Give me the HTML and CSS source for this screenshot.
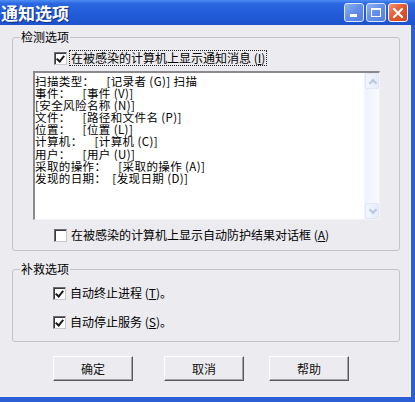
FILE: index.html
```html
<!DOCTYPE html>
<html lang="zh-CN">
    <head>
        <meta charset="UTF-8" />
        <link rel="stylesheet" href="styles.css">
        <title>通知选项</title>
    </head>

    <body>
        <div class="window">
            <div class="titlebar">
                <span class="title">通知选项</span>
                <div class="controls">
                    <span class="ctl min"><i></i></span>
                    <span class="ctl max"><i></i></span>
                    <span class="ctl close">
                        <svg width="12" height="12" viewBox="0 0 12 12"><path d="M2 2 L10 10 M10 2 L2 10" stroke="#fff" stroke-width="2.2" stroke-linecap="round"/></svg>
                    </span>
                </div>
            </div>

            <div class="frame">
                <div class="client">
                    <fieldset class="group detect">
                        <legend>检测选项</legend>
                        <label class="check first">
                            <span class="box checked"></span>
                            <span class="text focus">在被感染的计算机上显示通知消息 (<u>I</u>)</span>
                        </label>
                        <div class="memo">
                            <div class="memo-text">扫描类型：    [记录者 (G)] 扫描
事件：    [事件 (V)]
[安全风险名称 (N)]
文件：    [路径和文件名 (P)]
位置：    [位置 (L)]
计算机：    [计算机 (C)]
用户：    [用户 (U)]
采取的操作：    [采取的操作 (A)]
发现的日期：  [发现日期 (D)]</div>
                            <div class="scroll">
                                <span class="arrow up"></span>
                                <span class="track"></span>
                                <span class="arrow down"></span>
                            </div>
                        </div>
                        <label class="check second">
                            <span class="box"></span>
                            <span class="text">在被感染的计算机上显示自动防护结果对话框 (<u>A</u>)</span>
                        </label>
                    </fieldset>

                    <fieldset class="group remedy">
                        <legend>补救选项</legend>
                        <label class="check kill">
                            <span class="box checked"></span>
                            <span class="text">自动终止进程 (<u>T</u>)。</span>
                        </label>
                        <label class="check stop">
                            <span class="box checked"></span>
                            <span class="text">自动停止服务 (<u>S</u>)。</span>
                        </label>
                    </fieldset>

                    <div class="buttons">
                        <button class="btn ok">确定</button>
                        <button class="btn cancel">取消</button>
                        <button class="btn help">帮助</button>
                    </div>
                </div>
            </div>
        </div>
    </body>
</html>
```

FILE: styles.css
```css
@charset "utf-8";

* {
    margin: 0;
    padding: 0;
    box-sizing: border-box;
}

body {
    font-family: "Noto Sans CJK SC", "Liberation Sans", sans-serif;
    font-size: 12px;
    color: #000;
    overflow: hidden;
    background: #ecebef;
}

.window {
    width: 415px;
    height: 402px;
    display: flex;
    flex-direction: column;
}

/* title bar */
.titlebar {
    height: 25px;
    display: flex;
    align-items: center;
    justify-content: space-between;
    background: linear-gradient(to bottom, #4d8cf4 0%, #2a66e0 15%, #215bd8 60%, #1d52cc 100%);
}

.title {
    color: #fff;
    font-size: 17px;
    font-weight: 700;
    line-height: 20px;
    padding-left: 1px;
    text-shadow: 1px 1px 0 #0c2f88;
}

.controls {
    display: flex;
    gap: 2px;
    padding-right: 7px;
}

.ctl {
    width: 20px;
    height: 19px;
    border: 1px solid #dfe7fb;
    border-radius: 3px;
    display: flex;
    align-items: center;
    justify-content: center;
    background: linear-gradient(135deg, #8eb1f4 0%, #628de8 50%, #557fe0 100%);
}

.min {
    align-items: flex-end;
    justify-content: flex-start;
    padding: 0 0 4px 5px;
}

.min i {
    width: 7px;
    height: 3px;
    background: #fff;
}

.max i {
    width: 10px;
    height: 9px;
    border: 1px solid #fff;
    border-top-width: 2px;
}

.close {
    border-color: #f4f6fd;
    background: linear-gradient(135deg, #f39272 0%, #e2562e 50%, #d24522 100%);
}

/* frame */
.frame {
    flex: 1;
    border-right: 4px solid #2c5ed6;
    border-bottom: 5px solid #2c5ed6;
}

.client {
    height: 100%;
    padding-top: 5px;
    border-right: 1px solid #f7f3f8;
    border-bottom: 1px solid #f7eef6;
}

.group {
    width: 388px;
    margin-left: 12px;
    border: 1px solid #c4c2c9;
    border-radius: 3px;
    min-inline-size: 0;
}

.group legend {
    margin-left: 7px;
    padding: 0 1px;
    line-height: 14px;
    height: 14px;
}

.detect {
    padding-bottom: 7px;
}

.remedy {
    margin-top: 11px;
    padding-bottom: 11px;
}

/* checkboxes */
.check {
    display: flex;
    align-items: center;
    height: 16px;
    margin-left: 41px;
    gap: 2px;
}

.check .text {
    line-height: 14px;
    padding: 0 1px;
    border: 1px dotted transparent;
}

.check .focus {
    border-color: #222;
}

.check u {
    text-underline-offset: 1px;
}

.box {
    width: 13px;
    height: 13px;
    flex: none;
    background: #fff;
    border-top: 1px solid #6f6d72;
    border-left: 1px solid #6f6d72;
    border-right: 1px solid #c9c7cc;
    border-bottom: 1px solid #c9c7cc;
    box-shadow: inset 1px 1px 0 #3a393c;
    position: relative;
}

.box.checked::after {
    content: "";
    position: absolute;
    left: 3px;
    top: 1px;
    width: 3px;
    height: 6px;
    border-right: 2px solid #1a1a1a;
    border-bottom: 2px solid #1a1a1a;
    transform: rotate(40deg);
}

.first {
    margin-top: 6px;
}

.second {
    margin-top: 7px;
}

.kill {
    margin-top: 9px;
    margin-left: 40px;
}

.stop {
    margin-top: 13px;
    margin-left: 40px;
}

/* memo box */
.memo {
    display: flex;
    width: 347px;
    height: 149px;
    margin: 5px 0 0 20px;
    background: #fff;
    border-top: 2px solid #8b898e;
    border-left: 2px solid #8b898e;
    border-right: 1px solid #f4f2f6;
    border-bottom: 1px solid #f4f2f6;
}

.memo-text {
    flex: 1;
    white-space: pre;
    font-size: 11.5px;
    letter-spacing: 0.4px;
    line-height: 12.1px;
    padding: 2px 0 0 0;
    overflow: hidden;
}

.scroll {
    width: 15px;
    display: flex;
    flex-direction: column;
    background: linear-gradient(to right, #eef2fc, #f9fafe);
    border-left: 1px solid #f3f5fc;
}

.scroll .track {
    flex: 1;
}

.arrow {
    height: 16px;
    background: linear-gradient(to right, #f3f6fe, #e6ecfb);
    border: 1px solid #dfe6f6;
    border-radius: 2px;
    position: relative;
}

.arrow::after {
    content: "";
    position: absolute;
    left: 4px;
    width: 4px;
    height: 4px;
    border-left: 2px solid #b9c5e3;
    border-top: 2px solid #b9c5e3;
}

.arrow.up::after {
    top: 6px;
    transform: rotate(45deg);
}

.arrow.down::after {
    top: 3px;
    transform: rotate(225deg);
}

/* buttons */
.buttons {
    display: flex;
    margin-top: 14px;
}

.btn {
    width: 80px;
    height: 25px;
    font-family: inherit;
    font-size: 12px;
    color: #111;
    background: #ecebef;
    border: 1px solid;
    border-color: #fdfcfe #5a595c #5a595c #fdfcfe;
    box-shadow: inset -1px -1px 0 #a4a2a7;
}

.ok {
    margin-left: 53px;
}

.cancel {
    margin-left: 31px;
}

.help {
    margin-left: 25px;
}
```
